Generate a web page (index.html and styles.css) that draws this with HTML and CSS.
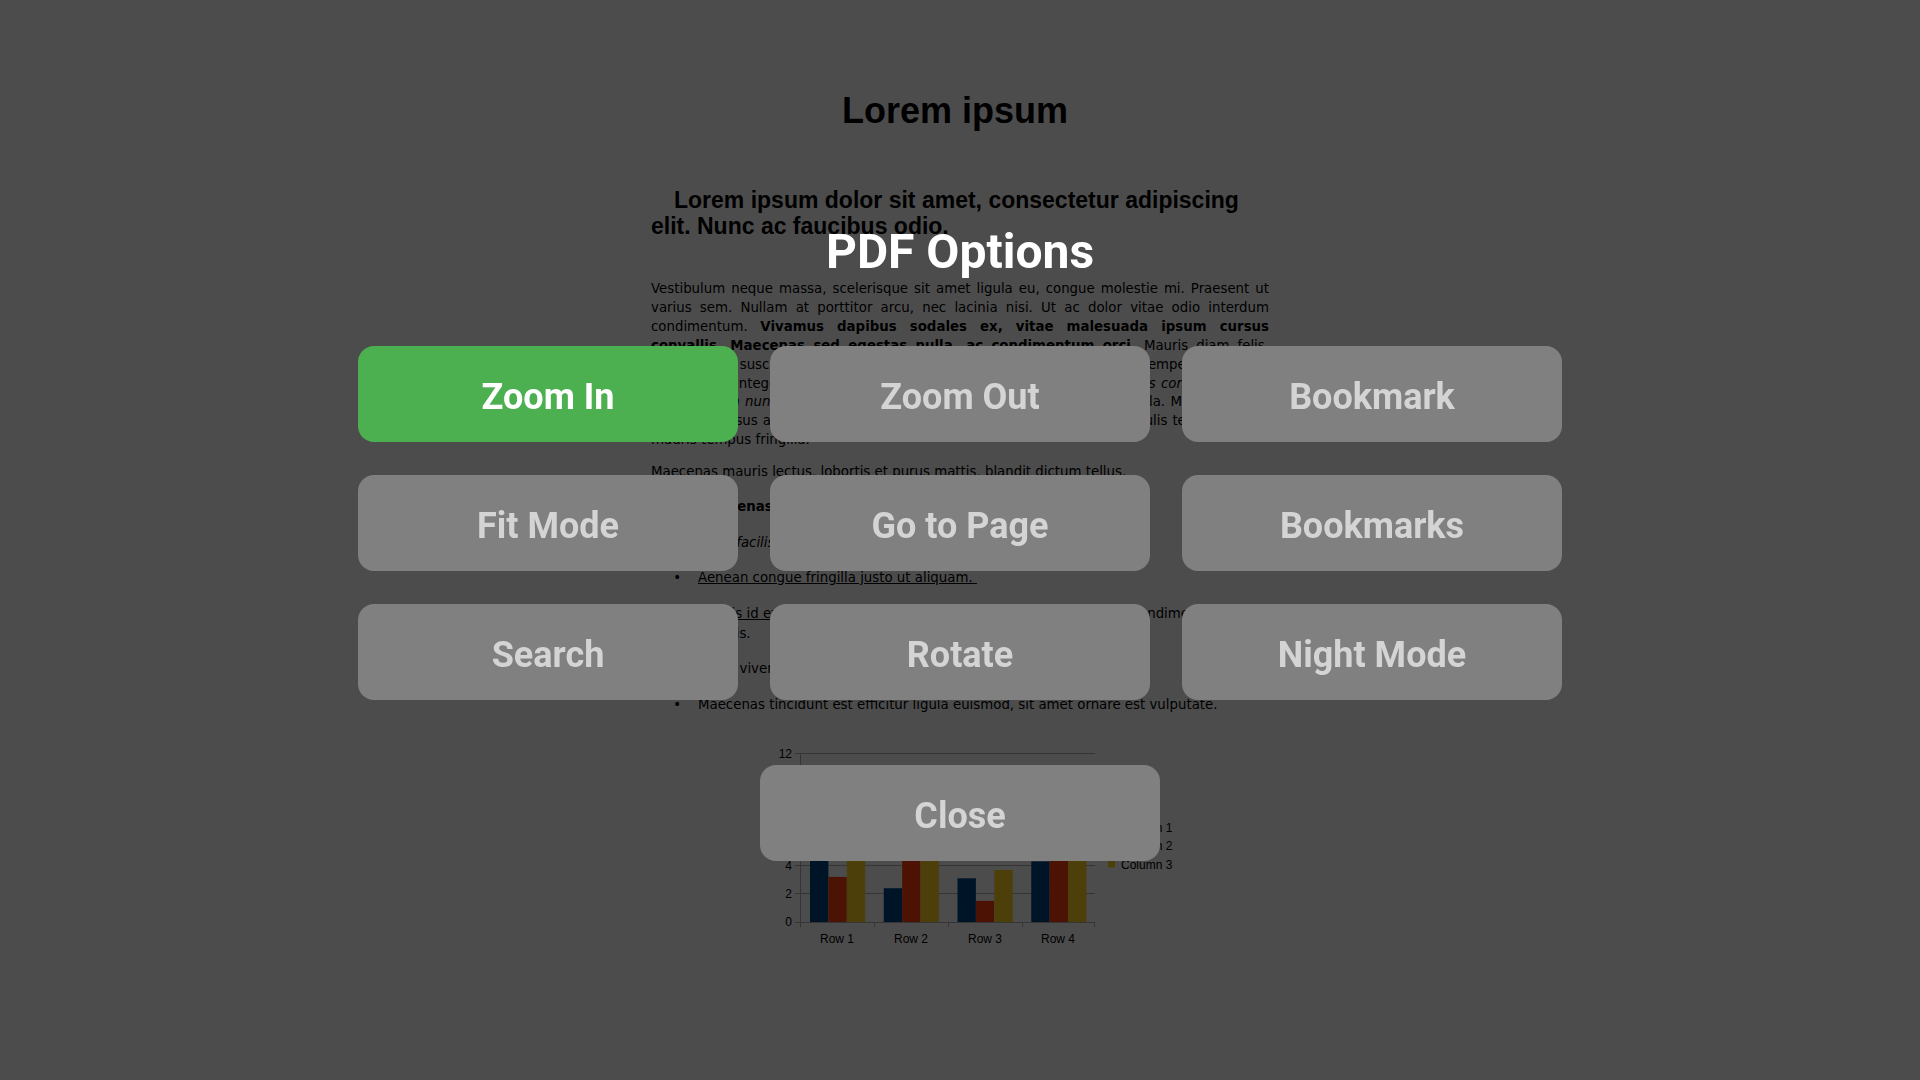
FILE: index.html
```html
<!DOCTYPE html>
<html lang="en">
<head>
<meta charset="utf-8">
<title>PDF Options</title>
<link rel="stylesheet" href="styles.css">
</head>
<body>
<main class="doc">
  <h1 class="doc-title">Lorem ipsum</h1>
  <p class="doc-lead">Lorem ipsum dolor sit amet, consectetur adipiscing elit. Nunc ac faucibus odio.</p>
  <p class="doc-text">Vestibulum neque massa, scelerisque sit amet ligula eu, congue molestie mi. Praesent ut varius sem. Nullam at porttitor arcu, nec lacinia nisi. Ut ac dolor vitae odio interdum condimentum. <b>Vivamus dapibus sodales ex, vitae malesuada ipsum cursus convallis. Maecenas sed egestas nulla, ac condimentum orci.</b> Mauris diam felis, vulputate ac suscipit et, iaculis non est. Curabitur semper arcu ac ligula semper, nec luctus nisl blandit. Integer lacinia ante ac libero lobortis imperdiet. <i>Nullam mollis convallis ipsum, ac accumsan nunc vehicula vitae.</i> Nulla eget justo in felis tristique fringilla. Morbi sit amet tortor quis risus auctor condimentum. Morbi in ullamcorper elit. Nulla iaculis tellus sit amet mauris tempus fringilla.</p>
  <p class="doc-line">Maecenas mauris lectus, lobortis et purus mattis, blandit dictum tellus.</p>
  <ul class="doc-list">
    <li><b>Maecenas non lorem quis tellus placerat varius.</b></li>
    <li><i>Nulla facilisis massa ut massa eleifend, ut vulputate elit facilisis.</i></li>
    <li><u>Aenean congue fringilla justo ut aliquam.&nbsp;</u></li>
    <li><u>Mauris id ex erat.</u> Nunc vulputate neque vitae justo facilisis, non condimentum ante sagittis.</li>
    <li>Morbi viverra semper lorem nec molestie.</li>
    <li>Maecenas tincidunt est efficitur ligula euismod, sit amet ornare est vulputate.</li>
  </ul>
  <svg class="chart" width="420" height="210" viewBox="0 0 420 210">
    <g stroke="#b3b3b3" stroke-width="1">
      <line x1="30" y1="13.5" x2="325" y2="13.5"/>
      <line x1="30" y1="41.5" x2="325" y2="41.5"/>
      <line x1="30" y1="69.5" x2="325" y2="69.5"/>
      <line x1="30" y1="97.5" x2="325" y2="97.5"/>
      <line x1="30" y1="125.5" x2="325" y2="125.5"/>
      <line x1="30" y1="153.5" x2="325" y2="153.5"/>
    </g>
    <g>
      <rect x="40" y="53.8" width="18.4" height="128.2" fill="#004586"/>
      <rect x="58.4" y="136.9" width="18.4" height="45.1" fill="#ff420e"/>
      <rect x="76.8" y="118.1" width="18.4" height="63.9" fill="#ffd320"/>
      <rect x="113.75" y="148.2" width="18.4" height="33.8" fill="#004586"/>
      <rect x="132.15" y="58.1" width="18.4" height="123.9" fill="#ff420e"/>
      <rect x="150.55" y="46.1" width="18.4" height="135.9" fill="#ffd320"/>
      <rect x="187.5" y="138.3" width="18.4" height="43.7" fill="#004586"/>
      <rect x="205.9" y="160.9" width="18.4" height="21.1" fill="#ff420e"/>
      <rect x="224.3" y="129.9" width="18.4" height="52.1" fill="#ffd320"/>
      <rect x="261.25" y="121.4" width="18.4" height="60.6" fill="#004586"/>
      <rect x="279.65" y="55" width="18.4" height="127" fill="#ff420e"/>
      <rect x="298.05" y="94.7" width="18.4" height="87.3" fill="#ffd320"/>
    </g>
    <g stroke="#b3b3b3" stroke-width="1">
      <line x1="30.5" y1="13" x2="30.5" y2="187"/>
      <line x1="25" y1="182.5" x2="325" y2="182.5"/>
      <line x1="104.5" y1="182" x2="104.5" y2="187"/>
      <line x1="178.5" y1="182" x2="178.5" y2="187"/>
      <line x1="252.5" y1="182" x2="252.5" y2="187"/>
      <line x1="324.5" y1="182" x2="324.5" y2="187"/>
      <line x1="25" y1="13.5" x2="30" y2="13.5"/>
      <line x1="25" y1="41.5" x2="30" y2="41.5"/>
      <line x1="25" y1="69.5" x2="30" y2="69.5"/>
      <line x1="25" y1="97.5" x2="30" y2="97.5"/>
      <line x1="25" y1="125.5" x2="30" y2="125.5"/>
      <line x1="25" y1="153.5" x2="30" y2="153.5"/>
    </g>
    <g class="chart-label" text-anchor="end">
      <text x="22" y="17.5">12</text>
      <text x="22" y="45.5">10</text>
      <text x="22" y="73.5">8</text>
      <text x="22" y="101.5">6</text>
      <text x="22" y="129.5">4</text>
      <text x="22" y="157.5">2</text>
      <text x="22" y="186">0</text>
    </g>
    <g class="chart-label" text-anchor="middle">
      <text x="67" y="203">Row 1</text>
      <text x="141" y="203">Row 2</text>
      <text x="215" y="203">Row 3</text>
      <text x="288" y="203">Row 4</text>
    </g>
    <g class="chart-label">
      <rect x="338" y="83.5" width="7" height="7" fill="#004586"/>
      <text x="351" y="91.5">Column 1</text>
      <rect x="338" y="101.5" width="7" height="7" fill="#ff420e"/>
      <text x="351" y="109.5">Column 2</text>
      <rect x="338" y="120.5" width="7" height="7" fill="#ffd320"/>
      <text x="351" y="128.5">Column 3</text>
    </g>
  </svg>
</main>

<div class="overlay">
  <h2 class="overlay-title">PDF Options</h2>
  <div class="option-grid">
    <button class="option option-active">Zoom In</button>
    <button class="option">Zoom Out</button>
    <button class="option">Bookmark</button>
    <button class="option">Fit Mode</button>
    <button class="option">Go to Page</button>
    <button class="option">Bookmarks</button>
    <button class="option">Search</button>
    <button class="option">Rotate</button>
    <button class="option">Night Mode</button>
  </div>
  <button class="option option-close">Close</button>
</div>
</body>
</html>
```

FILE: styles.css
```css
html, body {
  margin: 0;
  padding: 0;
}

body {
  background: #ffffff;
  color: #000000;
  width: 1920px;
  height: 1080px;
  overflow: hidden;
}

.doc {
  width: 618px;
  margin: 0 auto;
  padding-top: 90px;
  font-family: "DejaVu Sans", sans-serif;
  font-size: 13.33px;
  line-height: 18.9px;
}

.doc-title {
  margin: 0;
  font-family: "Liberation Sans", Arial, sans-serif;
  font-size: 36px;
  line-height: 41px;
  font-weight: bold;
  text-align: center;
  padding-right: 10px;
}

.doc-lead {
  margin: 56px 0 0;
  font-family: "Liberation Sans", Arial, sans-serif;
  font-size: 23px;
  line-height: 26px;
  font-weight: bold;
  text-indent: 23px;
}

.doc-text {
  margin: 41px 0 0;
  text-align: justify;
}

.doc-line {
  margin: 13px 0 0;
}

.doc-list {
  margin: 15px 0 0;
  padding-left: 47px;
  line-height: 20px;
}

.doc-list li {
  margin-bottom: 15.5px;
}

.doc-list li::marker {
  content: "\2022\00a0\00a0\00a0\00a0";
}

.chart {
  display: block;
  margin: 25px 0 0 119px;
}

.chart-label {
  font-family: "Liberation Sans", Arial, sans-serif;
  font-size: 12px;
  fill: #000000;
}

.overlay {
  position: fixed;
  inset: 0;
  background: rgba(0, 0, 0, 0.7);
  display: flex;
  flex-direction: column;
  align-items: center;
  justify-content: center;
  padding-top: 5px;
  box-sizing: border-box;
  font-family: Roboto, "Noto Sans", sans-serif;
}

.overlay-title {
  margin: 0 0 66px;
  color: #ffffff;
  font-size: 48px;
  line-height: 56px;
  font-weight: 700;
}

.option-grid {
  display: grid;
  grid-template-columns: repeat(3, 380px);
  grid-auto-rows: 96px;
  gap: 33px 32px;
  margin-bottom: 65px;
}

.option {
  border: none;
  border-radius: 16px;
  background: #808080;
  color: #d4d4d4;
  font-family: Roboto, "Noto Sans", sans-serif;
  font-size: 36px;
  font-weight: 700;
  padding: 5px 0 0;
  height: 96px;
  cursor: pointer;
}

.option-active {
  background: #4caf50;
  color: #ffffff;
}

.option-close {
  width: 400px;
}
```
